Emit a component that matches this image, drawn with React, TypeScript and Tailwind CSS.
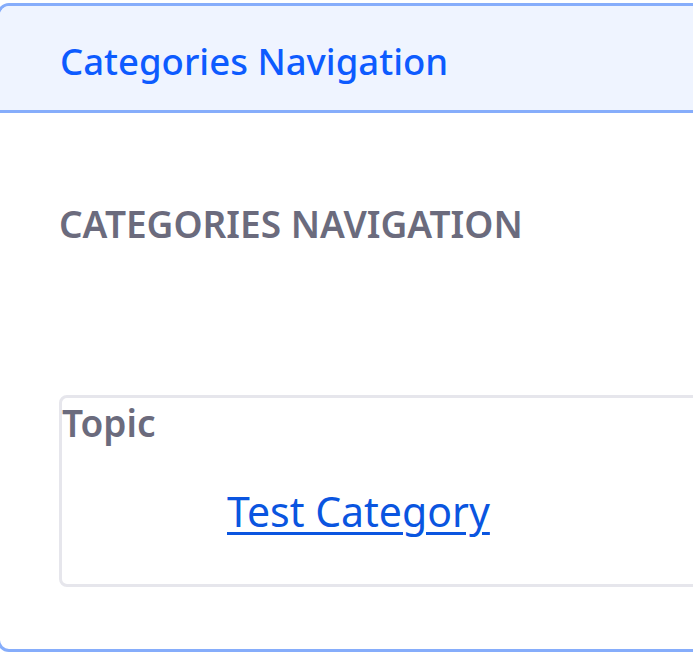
export default function App() {
    return (
        <div className="min-h-[652px] w-full overflow-hidden bg-white pt-[3px]" style={{ fontFamily: '"Noto Sans", "Open Sans", sans-serif' }}>
            {/* Card */}
            <div className="-ml-[3px] w-[760px] h-[649px] rounded-[12px] border-[3px] border-solid border-[#86adfb] bg-white overflow-hidden">
                {/* Header */}
                <div className="h-[107px] border-b-[3px] border-solid border-[#86adfb] bg-[#eff4ff] pl-[60px] pt-[6px] flex items-center">
                    <h2 className="text-[36.5px] font-medium text-[#0d5bff] leading-none">Categories Navigation</h2>
                </div>

                {/* Body */}
                <div className="pl-[59px] pt-[92px]">
                    <h3 className="text-[37px] font-semibold uppercase text-[#6b6b7d] leading-none">Categories Navigation</h3>

                    <div className="mt-[153px] h-[192px] rounded-[8px] border-[3px] border-solid border-[#e6e6ec] pt-[6px]">
                        <div className="text-[37px] font-semibold text-[#6b6b7d] leading-none">Topic</div>
                        <div className="pl-[165px] pt-[50px] leading-none">
                            <a href="#" className="text-[41px] leading-none text-[#0a55e0] underline underline-offset-[5px] decoration-[3px]">Test Category</a>
                        </div>
                    </div>
                </div>
            </div>
        </div>
    );
}
